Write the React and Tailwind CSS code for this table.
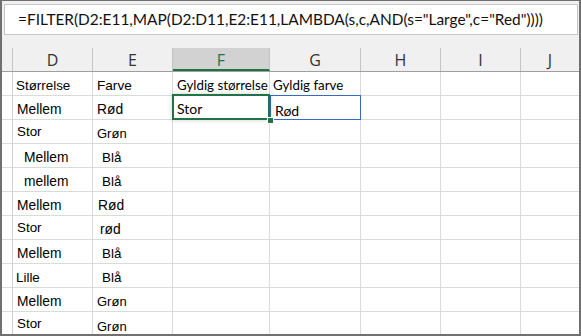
import React from "react";

const cols = [
  { key: "D", w: "w-[80px]" },
  { key: "E", w: "w-[80px]" },
  { key: "F", w: "w-[97px]" },
  { key: "G", w: "w-[91px]" },
  { key: "H", w: "w-[80px]" },
  { key: "I", w: "w-[80px]" },
];

const arial = "font-['Liberation_Sans',Arial,sans-serif]";
const lato = "font-['Lato',sans-serif]";

// each cell: text + full class string (indent, nudge, size)
const rows = [
  {
    d: ["Størrelse", "pl-[3px] pt-[5px] text-[13.4px]"],
    e: ["Farve", "pl-[4px] pt-[5px] text-[13.6px]"],
    f: ["Gyldig størrelse", "pl-[4px] pt-[5px] text-[13.3px]"],
    g: ["Gyldig farve", "pl-[3px] pt-[5px] text-[13.3px]"],
  },
  {
    d: ["Mellem", "pl-[4px] pt-[5px] text-[13.8px]"],
    e: ["Rød", "pl-[4px] pt-[5px] text-[13.8px]"],
    f: ["Stor", "pl-[4px] pt-[2px] text-[14px]"],
    g: ["Rød", "pl-[5px] pt-[6px] text-[14px]"],
  },
  { d: ["Stor", "pl-[4px] pt-[1px] text-[13.4px]"], e: ["Grøn", "pl-[4px] pt-[5px] text-[13px]"] },
  { d: ["Mellem", "pl-[11px] pt-[5px] text-[13.8px]"], e: ["Blå", "pl-[9px] pt-[5px] text-[13.4px]"] },
  { d: ["mellem", "pl-[11px] pt-[5px] text-[13.8px]"], e: ["Blå", "pl-[9px] pt-[5px] text-[13.4px]"] },
  { d: ["Mellem", "pl-[4px] pt-[5px] text-[13.8px]"], e: ["Rød", "pl-[5px] pt-[5px] text-[13.8px]"] },
  { d: ["Stor", "pl-[4px] pt-[1px] text-[13.4px]"], e: ["rød", "pl-[7px] pt-[6px] text-[13.8px]"] },
  { d: ["Mellem", "pl-[4px] pt-[6px] text-[13.8px]"], e: ["Blå", "pl-[9px] pt-[5px] text-[13.4px]"] },
  { d: ["Lille", "pl-[3px] pt-[5px] text-[13.4px]"], e: ["Blå", "pl-[9px] pt-[5px] text-[13.4px]"] },
  { d: ["Mellem", "pl-[4px] pt-[5px] text-[13.8px]"], e: ["Grøn", "pl-[4px] pt-[5px] text-[13px]"] },
  { d: ["Stor", "pl-[4px] pt-[2px] text-[13.4px]"], e: ["Grøn", "pl-[4px] pt-[6px] text-[13px]"] },
];

function Cell({ w, cell, font, last }) {
  return (
    <div
      className={`${w} shrink-0 h-full flex items-center whitespace-nowrap overflow-visible text-black ${font} ${
        last ? "" : "border-r border-[#dadada]"
      } ${cell ? cell[1] : ""}`}
    >
      {cell ? cell[0] : ""}
    </div>
  );
}

export default function App() {
  return (
    <div className="w-[581px] h-[336px] bg-[#f0f0f0] border-t border-x-2 border-b-2 border-[#707070] flex flex-col overflow-hidden">
      {/* Formula bar */}
      <div className="mt-[3px] ml-[2px] mr-[1px] h-[31px] shrink-0 bg-white border border-[#c8c8c8] flex items-center pl-[13px]">
        <span className={`${lato} text-[15.4px] text-[#111] whitespace-nowrap`}>
          =FILTER(D2:E11,MAP(D2:D11,E2:E11,LAMBDA(s,c,AND(s="Large",c="Red"))))
        </span>
      </div>

      {/* Column headers */}
      <div className="mt-[13px] h-[24px] shrink-0 flex border-b border-[#9f9f9f] font-['Open_Sans',sans-serif] text-[16px] text-[#333]">
        <div className="w-[11px] shrink-0 border-r border-[#c4c4c4]" />
        {cols.map((c) =>
          c.key === "F" ? (
            <div
              key={c.key}
              className={`${c.w} shrink-0 bg-[#d2d2d2] border-r border-[#c4c4c4] border-b-2 border-b-[#217346] text-[#217346] flex items-center justify-center pt-[2px]`}
            >
              {c.key}
            </div>
          ) : (
            <div
              key={c.key}
              className={`${c.w} shrink-0 border-r border-[#c4c4c4] flex items-center justify-center`}
            >
              {c.key}
            </div>
          )
        )}
        <div className="flex-1 flex items-center justify-center">J</div>
      </div>

      {/* Grid */}
      <div className="relative flex-1 bg-white overflow-hidden">
        {rows.map((r, i) => (
          <div key={i} className="h-[24px] flex border-b border-[#dadada]">
            <div className="w-[11px] shrink-0 h-full border-r border-[#d0d0d0]" />
            <Cell w="w-[80px]" cell={r.d} font={arial} />
            <Cell w="w-[80px]" cell={r.e} font={arial} />
            <Cell w="w-[97px]" cell={r.f} font={lato} />
            <Cell w="w-[91px]" cell={r.g} font={lato} />
            <Cell w="w-[80px]" />
            <Cell w="w-[80px]" />
            <div className="flex-1 h-full" />
          </div>
        ))}

        {/* spill range outline on G2 */}
        <div className="absolute left-[268px] top-[23px] w-[91px] h-[25px] border border-[#3a67c4] pointer-events-none" />
        {/* active cell F2 */}
        <div className="absolute left-[170px] top-[22px] w-[98px] h-[26px] border-2 border-[#217346] shadow-[0_0_5px_rgba(0,0,0,0.18)] pointer-events-none" />
        <div className="absolute left-[266px] top-[46px] w-[5px] h-[5px] bg-[#217346] outline outline-1 outline-white" />
      </div>
    </div>
  );
}
